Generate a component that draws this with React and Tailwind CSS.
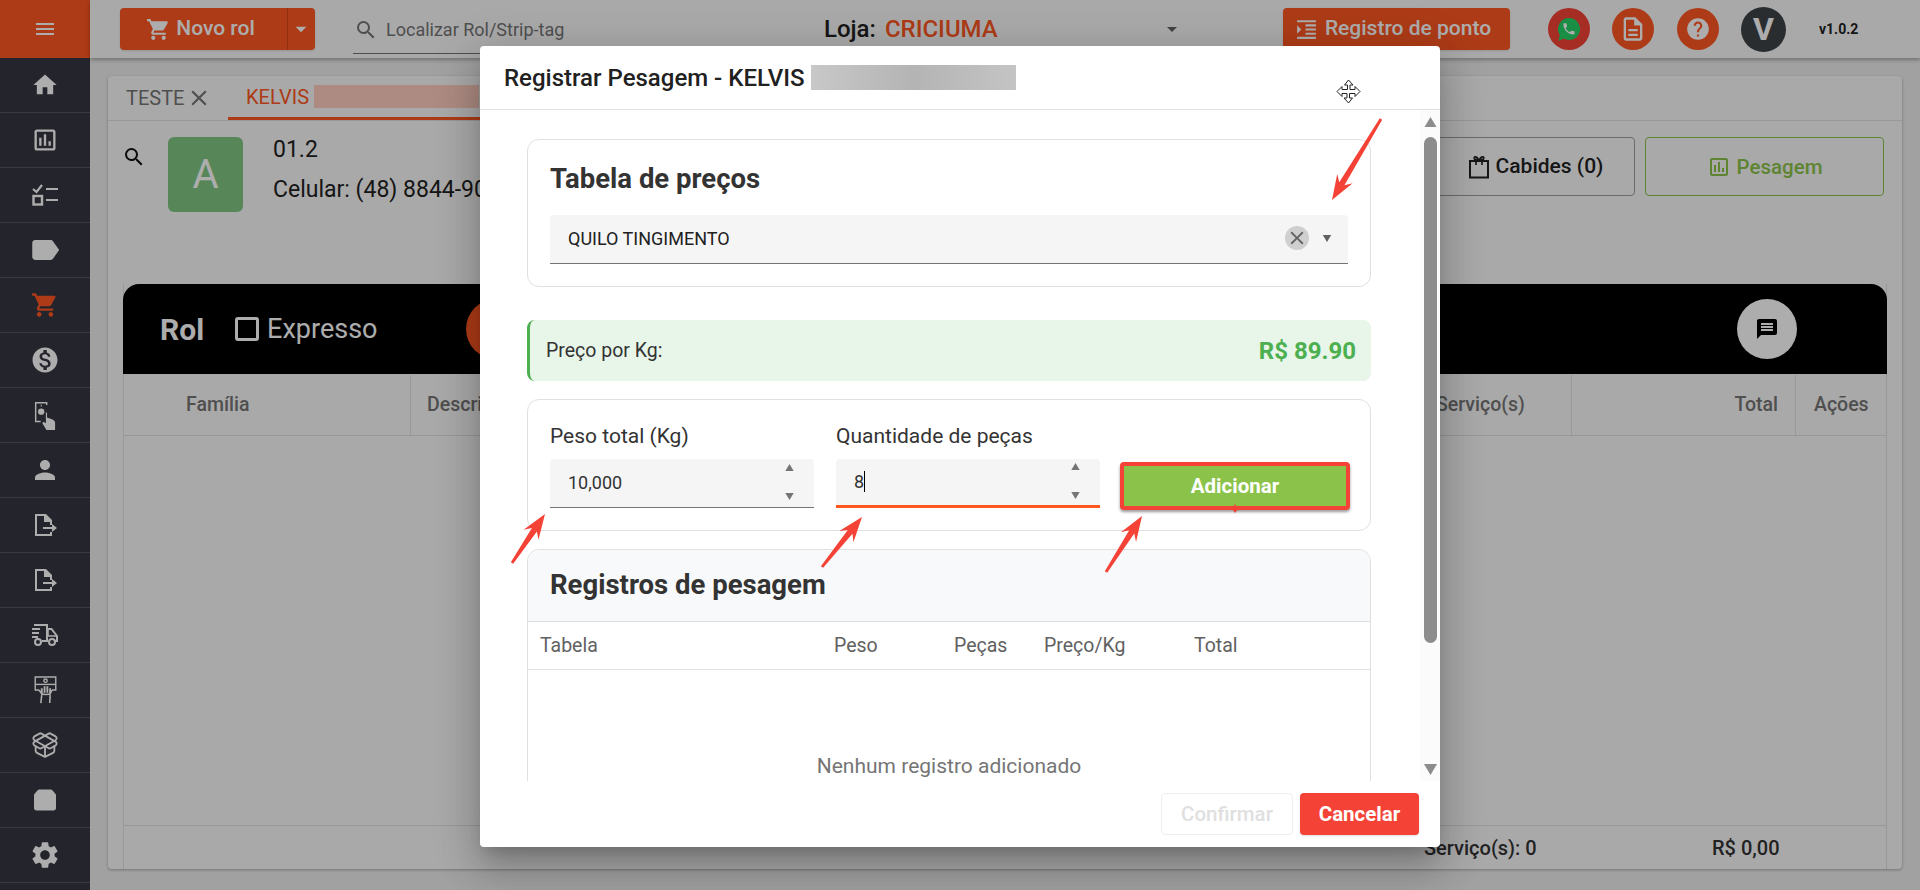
import {
  MdMenu, MdHome, MdOutlineAssessment, MdLabel, MdShoppingCart, MdMonetizationOn, MdPerson,
  MdSettings, MdArrowDropDown, MdSearch, MdClose, MdFormatIndentIncrease, MdOutlineDescription,
  MdHelp, MdMessage,
} from "react-icons/md";
import { PackageOpen } from "lucide-react";

function FileArrow() {
  return (
    <svg viewBox="0 0 26 26" className="h-[26px] w-[26px]" fill="currentColor">
      <path d="M3 2h11l6 6v5h-2v-3h-6V4H5v18h13v-2h2v4H3z" />
      <path d="M11 15h9v-3l5 4-5 4v-3h-9z" />
    </svg>
  );
}

function ChecklistIcon() {
  return (
    <svg viewBox="0 0 26 24" className="h-[24px] w-[26px]" fill="none" stroke="currentColor" strokeWidth="2">
      <path d="M1 6l3.500 3L10 2" strokeWidth="2.200" />
      <path d="M14 6h12M14 17h12" />
      <rect x="1.500" y="13" width="8.500" height="8.500" strokeWidth="2.400" />
    </svg>
  );
}

function TapIcon() {
  return (
    <svg viewBox="0 0 24 30" className="h-[29px] w-[23px]" fill="currentColor">
      <path d="M1 1h13v3h-1.500V2.500h-10v18H7V22H1z" />
      <circle cx="7.500" cy="11" r="3.300" />
      <path d="M7 3.500h1v2H7z" />
      <path d="M12 11.500c1 0 1.600.6 1.600 1.500v4l5 1.800c1.800.7 3.400 1.900 3.400 3.700V30h-9l-4-6.500c-.6-1 .6-2.200 1.800-1.400l1.600 1V13c0-.9-.4-1.500.6-1.500z" />
    </svg>
  );
}

function TruckIcon() {
  return (
    <svg viewBox="0 0 28 24" className="h-[24px] w-[28px]" fill="none" stroke="currentColor" strokeWidth="2">
      <path d="M3 2h13v16h-5M16 6h4.500l5.500 7v5h-2" />
      <path d="M17 6v7h9" strokeWidth="1.600" />
      <path d="M1 6h8M1 10h7M1 14h6" strokeWidth="2.200" />
      <circle cx="7" cy="19" r="3" />
      <circle cx="21" cy="19" r="3" />
    </svg>
  );
}

function HandCash() {
  return (
    <svg viewBox="0 0 24 30" className="h-[28px] w-[23px]" fill="none" stroke="currentColor" strokeWidth="1.500">
      <path d="M5 15H1V1h22v14h-4" />
      <path d="M1 9h22" />
      <circle cx="12" cy="5" r="1.800" />
      <path d="M8 19v-6M11 18v-7M14 18v-7M17 19v-6" strokeWidth="2" />
      <path d="M5 15l3 4c2 1 7 1 9 0l2-4M8 20l-1 9M17 20l-.5 9" strokeWidth="1.700" />
    </svg>
  );
}

function BoxTop() {
  return (
    <svg viewBox="0 0 24 22" className="h-[22px] w-[24px]" fill="currentColor">
      <path d="M7 .500h10c1.300 0 2.100.5 2.800 1.300L23 5.500V19c0 1.600-.9 2.500-2.500 2.500h-17C1.900 21.500 1 20.600 1 19V5.500l3.200-3.700C4.900 1 5.700.500 7 .500z" />
    </svg>
  );
}

function BagIcon() {
  return (
    <svg viewBox="0 0 22 24" className="h-[24px] w-[22px]" fill="none" stroke="currentColor" strokeWidth="2">
      <path d="M2 6h18v16.500H2z" />
      <path d="M11 6C9.500 1 5 .500 6.500 4L11 6c1.500-5 6-5.500 4.500-2L11 6M8 6v4M14 6v4" strokeWidth="1.700" />
    </svg>
  );
}

function WhatsappIcon() {
  return (
    <svg viewBox="0 0 24 25" className="h-[25px] w-[24px]">
      <path d="M12 1a11 11 0 1 1-5.300 20.600L1.500 24l1.300-6A11 11 0 0 1 12 1z" fill="#25d366" />
      <g transform="translate(4.500 4.500) scale(.62)">
        <path
          fill="#fff"
          d="M6.620 10.790c1.440 2.830 3.760 5.140 6.590 6.590l2.200-2.200c.27-.27.67-.36 1.020-.24 1.120.37 2.330.57 3.570.57.550 0 1 .45 1 1V20c0 .55-.45 1-1 1-9.390 0-17-7.610-17-17 0-.55.45-1 1-1h3.500c.55 0 1 .45 1 1 0 1.250.2 2.450.57 3.570.11.350.03.74-.25 1.020l-2.200 2.200z"
        />
      </g>
    </svg>
  );
}

function Triangle({ down, className }) {
  return (
    <svg viewBox="0 0 12 10" className={className} fill="currentColor">
      <path d={down ? "M0 0h12L6 10z" : "M6 0l6 10H0z"} />
    </svg>
  );
}

function Arrow({ x1, y1, x2, y2 }) {
  const len = Math.hypot(x2 - x1, y2 - y1);
  const ux = (x2 - x1) / len;
  const uy = (y2 - y1) / len;
  const nx = -uy;
  const ny = ux;
  const at = (along, side) => `${x2 - ux * along + nx * side},${y2 - uy * along + ny * side}`;
  const pts = [
    `${x1 + nx * 1.4},${y1 + ny * 1.4}`,
    at(19, 3), at(25, 9), at(0, 0), at(25, -9), at(19, -3),
    `${x1 - nx * 1.4},${y1 - ny * 1.4}`,
  ];
  return <polygon points={pts.join(" ")} fill="#f44336" />;
}

const menu = [
  <MdHome size={28} />,
  <MdOutlineAssessment size={28} />,
  <ChecklistIcon />,
  <MdLabel size={34} />,
  <MdShoppingCart size={28} className="text-[#ff5722]" />,
  <MdMonetizationOn size={30} />,
  <TapIcon />,
  <MdPerson size={30} />,
  <FileArrow />,
  <FileArrow />,
  <TruckIcon />,
  <HandCash />,
  <PackageOpen size={28} strokeWidth={1.6} />,
  <BoxTop />,
  <MdSettings size={32} />,
];

function Sidebar() {
  return (
    <aside className="flex w-[90px] shrink-0 flex-col bg-[#363641] text-white">
      <div className="flex h-[58px] items-center justify-center bg-[#ff5722]">
        <MdMenu size={24} />
      </div>
      {menu.map((icon, i) => (
        <div key={i} className="flex h-[55px] items-center justify-center border-b border-[#54545e]">
          {icon}
        </div>
      ))}
    </aside>
  );
}

function TopBar() {
  return (
    <header className="flex h-[58px] shrink-0 items-center bg-[#fafafa] pl-[30px] shadow-[0_2px_4px_rgba(0,0,0,.3)]">
      <div className="flex h-[42px] w-[195px] shrink-0 items-center rounded bg-[#ff5722] text-white shadow">
        <div className="flex h-full w-[168px] items-center justify-center gap-[5px] border-r border-[#d84315] pr-[6px] text-[21px] font-medium">
          <MdShoppingCart size={25} />
          Novo rol
        </div>
        <MdArrowDropDown size={26} />
      </div>
      <div className="ml-[38px] mt-[5px] flex h-[44px] w-[440px] shrink-0 items-center border-b border-[#757575] pb-[3px] pl-[1px] text-[18px] text-[#757575]">
        <MdSearch size={24} />
        <span className="ml-[8px]">Localizar Rol/Strip-tag</span>
      </div>
      <div className="ml-[31px] flex w-[360px] shrink-0 items-center text-[24px] font-medium">
        <span className="text-[#212121]">Loja:</span>
        <span className="ml-[9px] text-[#ff5722]">CRICIUMA</span>
        <MdArrowDropDown size={24} className="ml-auto text-[#616161]" />
      </div>
      <div className="ml-[99px] flex h-[42px] w-[227px] shrink-0 items-center justify-center gap-[6px] rounded bg-[#ff5722] pr-[8px] text-[21px] font-medium text-white shadow">
        <MdFormatIndentIncrease size={25} />
        Registro de ponto
      </div>
      <div className="ml-[38px] flex h-[42px] w-[42px] shrink-0 items-center justify-center rounded-full bg-[#f44336]">
        <WhatsappIcon />
      </div>
      <div className="ml-[22px] flex h-[42px] w-[42px] shrink-0 items-center justify-center rounded-full bg-[#ff5722] text-white">
        <MdOutlineDescription size={28} />
      </div>
      <div className="ml-[23px] flex h-[42px] w-[42px] shrink-0 items-center justify-center rounded-full bg-[#ff5722] text-white">
        <MdHelp size={26} />
      </div>
      <div className="ml-[22px] flex h-[45px] w-[45px] shrink-0 items-center justify-center rounded-full bg-[#3f4347] text-[32px] font-bold text-white">
        V
      </div>
      <span className="ml-[33px] text-[14px] font-bold text-[#212121]">v1.0.2</span>
    </header>
  );
}

function RolPanel() {
  return (
    <section className="mx-[18px] mt-[18px] flex h-[793px] flex-col rounded bg-[#fafafa] shadow-[0_1px_3px_rgba(0,0,0,.3)]">
      <div className="flex h-[45px] shrink-0 border-b border-[#e0e0e0] text-[20px]">
        <div className="flex w-[120px] items-center gap-[2px] pl-[18px] text-[#757575]">
          TESTE
          <MdClose size={26} />
        </div>
        <div className="flex w-[300px] items-center gap-[5px] border-b-[3px] border-[#ff5722] pl-[18px] text-[#ff5722]">
          KELVIS
          <span className="h-[23px] w-[165px] bg-[#ffcdc0]" />
        </div>
      </div>

      <div className="flex h-[163px] shrink-0 items-start pl-[14px] pr-[18px] pt-[16px]">
        <MdSearch size={24} className="mt-[8px] text-[#111]" />
        <div className="ml-[22px] flex h-[75px] w-[75px] items-center justify-center rounded-md bg-[#81c784] text-[40px] text-white">
          A
        </div>
        <div className="ml-[30px] -mt-[2px] text-[23px] leading-[30px] text-[#212121]">
          <div>01.2</div>
          <div className="mt-[10px]">Celular: (48) 8844-9000</div>
        </div>
        <div className="ml-auto flex h-[59px] w-[199px] items-center justify-center gap-[6px] rounded border border-[#9e9e9e] pt-[1px] text-[21px] font-medium text-[#212121]">
          <BagIcon />
          Cabides (0)
        </div>
        <div className="ml-[10px] flex h-[59px] w-[239px] items-center justify-center gap-[6px] rounded border border-[#8bc34a] pt-[1px] text-[20.5px] font-medium text-[#8bc34a]">
          <MdOutlineAssessment size={24} />
          Pesagem
        </div>
      </div>

      <div className="mx-[15px] flex flex-1 flex-col border-x border-[#e0e0e0]">
        <div className="-mx-[1px] flex h-[90px] shrink-0 items-center rounded-t-2xl bg-black pl-[37px] pr-[90px] text-white">
          <span className="text-[30px] font-bold">Rol</span>
          <span className="ml-[31px] h-[24px] w-[24px] rounded-[3px] border-[3px] border-white" />
          <span className="ml-[8px] text-[27px]">Expresso</span>
          <span className="ml-[89px] h-[60px] w-[60px] rounded-full bg-[#ff5722]" />
          <div className="ml-auto flex h-[60px] w-[60px] items-center justify-center rounded-full bg-white text-black">
            <MdMessage size={24} />
          </div>
        </div>
        <div className="flex h-[62px] shrink-0 items-stretch border-b border-[#e0e0e0] pt-[1px] text-[19.5px] font-medium text-[#757575]">
          <div className="flex w-[287px] items-center border-r border-[#e0e0e0] pl-[62px]">Família</div>
          <div className="flex flex-1 items-center pl-[16px]">Descrição</div>
          <div className="flex w-[158px] items-center border-r border-[#e0e0e0] pl-[22px]">Serviço(s)</div>
          <div className="flex w-[224px] items-center justify-end border-r border-[#e0e0e0] pr-[17px]">Total</div>
          <div className="flex w-[90px] items-center pl-[18px]">Ações</div>
        </div>
        <div className="flex-1" />
        <div className="flex h-[44px] shrink-0 items-center justify-end border-t border-[#e0e0e0] text-[20px] font-medium text-[#333]">
          <span className="w-[288px]">Serviço(s): 0</span>
          <span className="w-[174px]">R$ 0,00</span>
        </div>
      </div>
    </section>
  );
}

function NumberField({ label, value, active }) {
  return (
    <div className="w-[264px]">
      <div className="h-[24px] text-[21px] leading-[24px] text-[#333]">{label}</div>
      <div className={`mt-[11px] flex h-[49px] items-center rounded-t bg-[#f5f5f5] pb-[2px] pl-[18px] pr-[18px] text-[18px] text-[#333] ${active ? "border-b-[3px] border-[#ff5722]" : "border-b border-[#757575]"}`}>
        <span>{value}</span>
        {active && <span className="h-[21px] w-[1px] bg-black" />}
        <div className="ml-auto flex h-[36px] flex-col justify-between text-[#757575]">
          <Triangle className="h-[7px] w-[13px]" />
          <Triangle down className="h-[7px] w-[13px]" />
        </div>
      </div>
    </div>
  );
}

function PesagemDialog() {
  return (
    <div className="absolute left-[480px] top-[46px] flex h-[801px] w-[960px] flex-col rounded bg-white shadow-[0_11px_15px_-7px_rgba(0,0,0,.2),0_24px_38px_3px_rgba(0,0,0,.14),0_9px_46px_8px_rgba(0,0,0,.12)]">
      <div className="flex h-[64px] shrink-0 items-start border-b border-[#e0e0e0] pl-[24px] pt-[16px] text-[24px] font-medium leading-[32px] text-[#212121]">
        Registrar Pesagem - KELVIS
        <span className="ml-[6px] mt-[3px] h-[25px] w-[205px] bg-gradient-to-r from-[#c8c8c8] via-[#b4b4b4] to-[#c4c4c4]" />
      </div>

      <div className="flex h-[671px] shrink-0">
        <div className="flex-1 overflow-hidden pl-[47px] pr-[49px] pt-[29px]">
          <div className="h-[148px] rounded-xl border border-[#e0e0e0] px-[22px] pt-[24px]">
            <h3 className="text-[27.5px] font-bold leading-[30px] text-[#333]">Tabela de preços</h3>
            <div className="mt-[21px] flex h-[49px] items-center rounded-t border-b border-[#757575] bg-[#f5f5f5] pb-[2px] pl-[18px] pr-[14px] text-[18px] text-[#212121]">
              QUILO TINGIMENTO
              <span className="ml-auto flex h-[24px] w-[24px] items-center justify-center rounded-full bg-[#cfcfcf] text-[#616161]">
                <MdClose size={22} />
              </span>
              <Triangle down className="ml-[11px] h-[7px] w-[14px] text-[#616161]" />
            </div>
          </div>

          <div className="mt-[33px] flex h-[61px] items-center justify-between rounded-lg border-l-[3px] border-[#4caf50] bg-[#e8f5e9] pl-[16px] pr-[15px]">
            <span className="text-[19.5px] text-[#333]">Preço por Kg:</span>
            <span className="text-[24px] font-bold text-[#4caf50]">R$ 89.90</span>
          </div>

          <div className="relative mt-[18px] flex h-[132px] items-start gap-[22px] rounded-xl border border-[#e0e0e0] pl-[22px] pt-[24px]">
            <NumberField label="Peso total (Kg)" value="10,000" />
            <NumberField label="Quantidade de peças" value="8" active />
            <div className="-ml-[2px] mt-[38px] flex h-[48px] w-[230px] items-center justify-center rounded border-[4px] border-[#f44336] bg-[#8bc34a] pt-[1px] text-[20.5px] font-bold text-white shadow-[0_2px_3px_rgba(0,0,0,.4)]">
              Adicionar
            </div>
          </div>

          <div className="mt-[18px] h-[300px] rounded-t-xl border border-[#e0e0e0]">
            <div className="flex h-[72px] items-center rounded-t-xl border-b border-[#e0e0e0] bg-[#f8f9fa] pb-[2px] pl-[22px] text-[27.5px] font-bold text-[#333]">
              Registros de pesagem
            </div>
            <div className="flex h-[48px] items-center border-b border-[#e0e0e0] pl-[12px] text-[19.5px] text-[#616161]">
              <span className="w-[294px]">Tabela</span>
              <span className="w-[120px]">Peso</span>
              <span className="w-[90px]">Peças</span>
              <span className="w-[150px]">Preço/Kg</span>
              <span>Total</span>
            </div>
            <div className="pt-[81px] text-center text-[21px] text-[#757575]">Nenhum registro adicionado</div>
          </div>
        </div>

        <div className="flex w-[20px] shrink-0 flex-col items-center bg-[#fbfbfb] pt-[7px] text-[#8c8c8c]">
          <Triangle className="h-[10px] w-[13px]" />
          <div className="mt-[10px] h-[506px] w-[13px] rounded-full bg-[#8c8c8c]" />
          <Triangle down className="mt-[121px] h-[11px] w-[13px]" />
        </div>
      </div>

      <div className="flex flex-1 items-start justify-end gap-[7px] pr-[21px] pt-[12px]">
        <div className="flex h-[42px] w-[132px] items-center justify-center rounded border border-[#eeeeee] text-[20.5px] font-medium text-[#e0e0e0]">
          Confirmar
        </div>
        <div className="flex h-[42px] w-[119px] items-center justify-center rounded bg-[#f44336] text-[20.5px] font-bold text-white shadow">
          Cancelar
        </div>
      </div>
    </div>
  );
}

function Annotations() {
  return (
    <svg viewBox="0 0 1920 890" className="pointer-events-none absolute inset-0 h-[890px] w-[1920px]">
      <Arrow x1={1381} y1={119} x2={1332} y2={200} />
      <Arrow x1={512} y1={563} x2={545} y2={514} />
      <Arrow x1={822} y1={567} x2={862} y2={517} />
      <Arrow x1={1106} y1={572} x2={1142} y2={516} />
      <polygon points="1235,504 1238,509 1235,513 1232,509" fill="#f44336" />
      <path
        transform="translate(1337 80)"
        d="M11.500 0l4.500 5h-3v4.500H18v-3l5 5-5 5v-3h-5.500V18h3l-4 5-4.500-5h3v-4.500H5v3l-5-5 5-5v3h5.500V5h-3z"
        fill="#fff"
        stroke="#222"
        strokeWidth="1"
      />
    </svg>
  );
}

export default function App() {
  return (
    <div className="relative flex h-[890px] w-[1920px] overflow-hidden bg-[#eeeeee] font-['Roboto',sans-serif]">
      <Sidebar />
      <main className="flex min-w-0 flex-1 flex-col">
        <TopBar />
        <RolPanel />
      </main>
      <div className="absolute inset-0 bg-black/32" />
      <PesagemDialog />
      <Annotations />
    </div>
  );
}
